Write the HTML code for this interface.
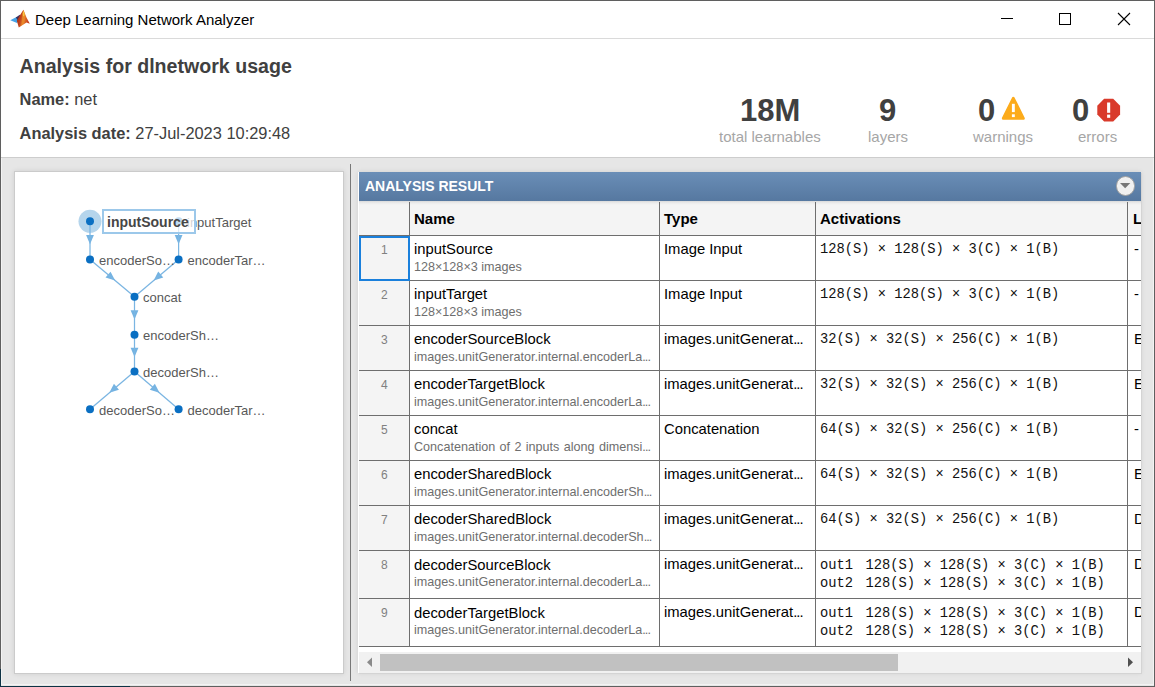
<!DOCTYPE html><html><head><meta charset="utf-8"><style>
html,body{margin:0;padding:0;width:1155px;height:687px;overflow:hidden;background:#e6e6e6;}
body{position:relative;font-family:"Liberation Sans",sans-serif;}
.a{position:absolute;}
.t{position:absolute;line-height:0;white-space:pre;}
</style></head><body>
<div class="a" style="left:0;top:0;width:1153px;height:685px;border:1px solid #5f5f5f;background:#e6e6e6"></div>
<div class="a" style="left:1px;top:158px;width:1151px;height:526px;border:1px solid #f3f3f3;border-top:0"></div>
<div class="a" style="left:0;top:686px;width:130px;height:1px;background:#0d3244"></div>
<div class="a" style="left:0;top:669px;width:1px;height:18px;background:#0d3244"></div>
<div class="a" style="left:1px;top:1px;width:1153px;height:37px;background:#fff;border-bottom:1px solid #dadada"></div>
<div class="a" style="left:1px;top:39px;width:1153px;height:118px;background:#fff;border-bottom:1px solid #cdcdcd"></div>
<svg class="a" style="left:0;top:0" width="32" height="32" viewBox="0 0 32 32">
 <defs><linearGradient id="mg1" x1="0" y1="0" x2="1" y2="0.3"><stop offset="0" stop-color="#8f2416"/><stop offset="0.4" stop-color="#c2421c"/><stop offset="0.62" stop-color="#e8842a"/><stop offset="1" stop-color="#c63a1c"/></linearGradient></defs>
 <path d="M10.3,20.3 L16.5,17 L19,19.5 L17,23 Z" fill="#46a2e6"/>
 <path d="M15.8,17.6 L19.8,14.8 L21,19 L18,20.5 Z" fill="#3a2f5e"/>
 <path d="M23.4,9.8 L26.5,17.5 L29.8,23.8 L26.5,22.5 L18.8,27.6 L16.8,20.8 L19.8,15.5 Z" fill="url(#mg1)"/>
 <path d="M23.4,9.8 L25.3,16.5 L24.3,23 L21.5,25.5 L22.2,17 Z" fill="#e98a2b" opacity="0.85"/>
 <ellipse cx="23.6" cy="13.8" rx="0.9" ry="2.6" fill="#f8c63e"/>
</svg>
<div class="t" style="left:35px;top:19.80px;font-size:15px;color:#000;font-weight:normal;font-family:'Liberation Sans',sans-serif;">Deep Learning Network Analyzer</div>
<div class="a" style="left:1001px;top:18px;width:12px;height:1px;background:#000"></div>
<div class="a" style="left:1059px;top:13px;width:10px;height:10px;border:1px solid #000"></div>
<svg class="a" style="left:1117px;top:12px" width="14" height="14" viewBox="0 0 14 14"><path d="M1,1 L13,13 M13,1 L1,13" stroke="#000" stroke-width="1.1"/></svg>
<div class="t" style="left:19.6px;top:66.21px;font-size:19.6px;color:#404040;font-weight:bold;font-family:'Liberation Sans',sans-serif;">Analysis for dlnetwork usage</div>
<div class="t" style="left:19.6px;top:99.32px;font-size:16.4px;color:#404040;font-weight:normal;font-family:'Liberation Sans',sans-serif;"><b>Name:</b> net</div>
<div class="t" style="left:19.6px;top:133.32px;font-size:16.4px;color:#404040;font-weight:normal;font-family:'Liberation Sans',sans-serif;"><b>Analysis date:</b> 27-Jul-2023 10:29:48</div>
<div class="t" style="left:740px;top:111.06px;font-size:31px;color:#404040;font-weight:bold;font-family:'Liberation Sans',sans-serif;">18M</div>
<div class="t" style="left:879px;top:111.06px;font-size:31px;color:#404040;font-weight:bold;font-family:'Liberation Sans',sans-serif;">9</div>
<div class="t" style="left:978px;top:111.06px;font-size:31px;color:#404040;font-weight:bold;font-family:'Liberation Sans',sans-serif;">0</div>
<div class="t" style="left:1072px;top:111.06px;font-size:31px;color:#404040;font-weight:bold;font-family:'Liberation Sans',sans-serif;">0</div>
<div class="t" style="left:719px;top:136.80px;font-size:15px;color:#a6a6a6;font-weight:normal;font-family:'Liberation Sans',sans-serif;">total learnables</div>
<div class="t" style="left:868px;top:136.80px;font-size:15px;color:#a6a6a6;font-weight:normal;font-family:'Liberation Sans',sans-serif;">layers</div>
<div class="t" style="left:973px;top:136.80px;font-size:15px;color:#a6a6a6;font-weight:normal;font-family:'Liberation Sans',sans-serif;">warnings</div>
<div class="t" style="left:1078px;top:136.80px;font-size:15px;color:#a6a6a6;font-weight:normal;font-family:'Liberation Sans',sans-serif;">errors</div>
<svg class="a" style="left:1000px;top:95px" width="27" height="27" viewBox="1000 95 27 27">
 <path d="M1013.3,98.3 L1023.3,118.3 L1003.3,118.3 Z" fill="#fcab1b" stroke="#fcab1b" stroke-width="3" stroke-linejoin="round"/>
 <rect x="1011.9" y="103.8" width="2.9" height="8.3" fill="#fff"/><rect x="1011.9" y="114.3" width="2.9" height="2.8" fill="#fff"/>
</svg>
<svg class="a" style="left:1096px;top:97px" width="26" height="26" viewBox="1096 97 26 26">
 <path d="M1104.1,98.8 L1113.2,98.8 L1120.1,105.7 L1120.1,114.6 L1113.2,121.5 L1104.1,121.5 L1097.3,114.6 L1097.3,105.7 Z" fill="#d93a2b"/>
 <rect x="1107.1" y="102.5" width="3.1" height="10.3" fill="#fff"/><rect x="1107.1" y="114.6" width="3.1" height="3.2" fill="#fff"/>
</svg>
<div class="a" style="left:14px;top:171px;width:328px;height:501px;background:#fff;border:1px solid #cbcbcb;box-shadow:0 0 5px rgba(0,0,0,0.10)"></div>
<div class="a" style="left:350px;top:164px;width:1px;height:517px;background:#787878"></div>
<div class="a" style="left:358px;top:172px;width:783px;height:501px;background:#fff;box-shadow:1px 1px 0 #d4d4d4,0 0 5px rgba(0,0,0,0.10)"></div>
<svg class="a" style="left:0;top:0" width="350" height="687" viewBox="0 0 350 687"><circle cx="90" cy="221.3" r="11.5" fill="#b5d5ec"/><path d="M90.00,244.20 L86.10,234.90 L93.90,234.90 Z" fill="#74b3e2"/><line x1="90" y1="221.3" x2="90" y2="259.5" stroke="#7ab5e2" stroke-width="1.25"/><path d="M178.60,244.20 L174.70,234.90 L182.50,234.90 Z" fill="#74b3e2"/><line x1="178.6" y1="221.3" x2="178.6" y2="259.5" stroke="#7ab5e2" stroke-width="1.25"/><path d="M115.16,280.59 L105.53,277.61 L110.54,271.63 Z" fill="#74b3e2"/><line x1="90" y1="259.5" x2="134.5" y2="296.8" stroke="#7ab5e2" stroke-width="1.25"/><path d="M153.65,280.60 L158.23,271.62 L163.27,277.58 Z" fill="#74b3e2"/><line x1="178.6" y1="259.5" x2="134.5" y2="296.8" stroke="#7ab5e2" stroke-width="1.25"/><path d="M134.50,319.55 L130.60,310.25 L138.40,310.25 Z" fill="#74b3e2"/><line x1="134.5" y1="296.8" x2="134.5" y2="334.7" stroke="#7ab5e2" stroke-width="1.25"/><path d="M134.50,356.95 L130.60,347.65 L138.40,347.65 Z" fill="#74b3e2"/><line x1="134.5" y1="334.7" x2="134.5" y2="371.6" stroke="#7ab5e2" stroke-width="1.25"/><path d="M109.35,392.85 L113.93,383.87 L118.97,389.83 Z" fill="#74b3e2"/><line x1="134.5" y1="371.6" x2="90" y2="409.2" stroke="#7ab5e2" stroke-width="1.25"/><path d="M159.44,392.87 L149.83,389.80 L154.90,383.86 Z" fill="#74b3e2"/><line x1="134.5" y1="371.6" x2="178.6" y2="409.2" stroke="#7ab5e2" stroke-width="1.25"/><circle cx="90" cy="221.3" r="4" fill="#0a6fc2"/><circle cx="178.6" cy="221.3" r="4" fill="#0a6fc2"/><circle cx="90" cy="259.5" r="4" fill="#0a6fc2"/><circle cx="178.6" cy="259.5" r="4" fill="#0a6fc2"/><circle cx="134.5" cy="296.8" r="4" fill="#0a6fc2"/><circle cx="134.5" cy="334.7" r="4" fill="#0a6fc2"/><circle cx="134.5" cy="371.6" r="4" fill="#0a6fc2"/><circle cx="90" cy="409.2" r="4" fill="#0a6fc2"/><circle cx="178.6" cy="409.2" r="4" fill="#0a6fc2"/></svg>
<div class="t" style="left:187px;top:222.70px;font-size:13px;color:#585858;font-weight:normal;font-family:'Liberation Sans',sans-serif;">inputTarget</div>
<div class="t" style="left:99px;top:260.80px;font-size:13px;color:#585858;font-weight:normal;font-family:'Liberation Sans',sans-serif;">encoderSo…</div>
<div class="t" style="left:187.5px;top:260.80px;font-size:13px;color:#585858;font-weight:normal;font-family:'Liberation Sans',sans-serif;">encoderTar…</div>
<div class="t" style="left:143px;top:297.80px;font-size:13px;color:#585858;font-weight:normal;font-family:'Liberation Sans',sans-serif;">concat</div>
<div class="t" style="left:143px;top:335.80px;font-size:13px;color:#585858;font-weight:normal;font-family:'Liberation Sans',sans-serif;">encoderSh…</div>
<div class="t" style="left:143px;top:372.70px;font-size:13px;color:#585858;font-weight:normal;font-family:'Liberation Sans',sans-serif;">decoderSh…</div>
<div class="t" style="left:99px;top:410.80px;font-size:13px;color:#585858;font-weight:normal;font-family:'Liberation Sans',sans-serif;">decoderSo…</div>
<div class="t" style="left:187.5px;top:410.80px;font-size:13px;color:#585858;font-weight:normal;font-family:'Liberation Sans',sans-serif;">decoderTar…</div>
<div class="a" style="left:102px;top:209px;width:90px;height:21px;border:2px solid #9cc8ea;background:rgba(255,255,255,0.75)"></div>
<div class="t" style="left:107px;top:222.45px;font-size:14px;color:#464646;font-weight:bold;font-family:'Liberation Sans',sans-serif;">inputSource</div>
<div class="a" style="left:359px;top:172px;width:782px;height:29px;background:linear-gradient(#6a8eb7,#5678a0)"></div>
<div class="t" style="left:365px;top:186.15px;font-size:14px;color:#fff;font-weight:bold;font-family:'Liberation Sans',sans-serif;">ANALYSIS RESULT</div>
<div class="a" style="left:1115.5px;top:176.4px;width:17.2px;height:17.2px;border-radius:50%;background:#f0f0f0;border:1px solid #a0a0a0"></div>
<svg class="a" style="left:1120px;top:183px" width="11" height="6" viewBox="0 0 11 6"><path d="M0,0 L10.3,0 L5.15,5.3 Z" fill="#777"/></svg>
<div class="a" style="left:359px;top:201px;width:782px;height:34px;background:linear-gradient(#d9d9d9 0px,#ececec 2px,#f4f4f4 4px)"></div>
<div class="a" style="left:359px;top:235px;width:782px;height:1px;background:#6e6e6e"></div>
<div class="a" style="left:409px;top:202px;width:1px;height:444px;background:#6e6e6e"></div>
<div class="a" style="left:659px;top:202px;width:1px;height:444px;background:#6e6e6e"></div>
<div class="a" style="left:815px;top:202px;width:1px;height:444px;background:#6e6e6e"></div>
<div class="a" style="left:1127px;top:202px;width:1px;height:444px;background:#6e6e6e"></div>
<div class="t" style="left:414px;top:218.80px;font-size:15px;color:#000;font-weight:bold;font-family:'Liberation Sans',sans-serif;">Name</div>
<div class="t" style="left:664px;top:218.80px;font-size:15px;color:#000;font-weight:bold;font-family:'Liberation Sans',sans-serif;">Type</div>
<div class="t" style="left:820px;top:218.80px;font-size:15px;color:#000;font-weight:bold;font-family:'Liberation Sans',sans-serif;">Activations</div>
<div class="a" style="left:1128px;top:203px;width:13px;height:30px;overflow:hidden">
<div class="t" style="left:5px;top:15.80px;font-size:15px;color:#000;font-weight:bold;font-family:'Liberation Sans',sans-serif;">L</div>
</div>
<div class="a" style="left:359px;top:236px;width:50px;height:44px;background:#f4f4f4"></div>
<div class="a" style="left:359px;top:280px;width:782px;height:1px;background:#6e6e6e"></div>
<div class="t" style="left:381px;top:249.54px;font-size:12px;color:#808080;font-weight:normal;font-family:'Liberation Sans',sans-serif;">1</div>
<div class="t" style="left:414px;top:249.07px;font-size:14.8px;color:#000;font-weight:normal;font-family:'Liberation Sans',sans-serif;">inputSource</div>
<div class="t" style="left:414px;top:266.93px;font-size:12.6px;color:#6e6e6e;font-weight:normal;font-family:'Liberation Sans',sans-serif;">128×128×3 images</div>
<div class="t" style="left:664px;top:248.57px;font-size:14.8px;color:#000;font-weight:normal;font-family:'Liberation Sans',sans-serif;">Image Input</div>
<div class="t" style="left:820px;top:249.84px;font-size:13.75px;color:#111;font-weight:normal;font-family:'Liberation Mono',monospace;">128(S) × 128(S) × 3(C) × 1(B)</div>
<div class="a" style="left:1128px;top:236px;width:13px;height:40px;overflow:hidden">
<div class="t" style="left:6px;top:12.57px;font-size:14.8px;color:#000;font-weight:normal;font-family:'Liberation Sans',sans-serif;">-</div>
</div>
<div class="a" style="left:359px;top:281px;width:50px;height:44px;background:#f4f4f4"></div>
<div class="a" style="left:359px;top:325px;width:782px;height:1px;background:#6e6e6e"></div>
<div class="t" style="left:381px;top:294.54px;font-size:12px;color:#808080;font-weight:normal;font-family:'Liberation Sans',sans-serif;">2</div>
<div class="t" style="left:414px;top:294.07px;font-size:14.8px;color:#000;font-weight:normal;font-family:'Liberation Sans',sans-serif;">inputTarget</div>
<div class="t" style="left:414px;top:311.93px;font-size:12.6px;color:#6e6e6e;font-weight:normal;font-family:'Liberation Sans',sans-serif;">128×128×3 images</div>
<div class="t" style="left:664px;top:293.57px;font-size:14.8px;color:#000;font-weight:normal;font-family:'Liberation Sans',sans-serif;">Image Input</div>
<div class="t" style="left:820px;top:294.84px;font-size:13.75px;color:#111;font-weight:normal;font-family:'Liberation Mono',monospace;">128(S) × 128(S) × 3(C) × 1(B)</div>
<div class="a" style="left:1128px;top:281px;width:13px;height:40px;overflow:hidden">
<div class="t" style="left:6px;top:12.57px;font-size:14.8px;color:#000;font-weight:normal;font-family:'Liberation Sans',sans-serif;">-</div>
</div>
<div class="a" style="left:359px;top:326px;width:50px;height:44px;background:#f4f4f4"></div>
<div class="a" style="left:359px;top:370px;width:782px;height:1px;background:#6e6e6e"></div>
<div class="t" style="left:381px;top:339.54px;font-size:12px;color:#808080;font-weight:normal;font-family:'Liberation Sans',sans-serif;">3</div>
<div class="t" style="left:414px;top:339.07px;font-size:14.8px;color:#000;font-weight:normal;font-family:'Liberation Sans',sans-serif;">encoderSourceBlock</div>
<div class="t" style="left:414px;top:356.93px;font-size:12.6px;color:#6e6e6e;font-weight:normal;font-family:'Liberation Sans',sans-serif;">images.unitGenerator.internal.encoderLa<span style="letter-spacing:-0.9px">...</span></div>
<div class="t" style="left:664px;top:338.57px;font-size:14.8px;color:#000;font-weight:normal;font-family:'Liberation Sans',sans-serif;">images.unitGenerat<span style="letter-spacing:-0.9px">...</span></div>
<div class="t" style="left:820px;top:339.84px;font-size:13.75px;color:#111;font-weight:normal;font-family:'Liberation Mono',monospace;">32(S) × 32(S) × 256(C) × 1(B)</div>
<div class="a" style="left:1128px;top:326px;width:13px;height:40px;overflow:hidden">
<div class="t" style="left:6px;top:12.57px;font-size:14.8px;color:#000;font-weight:normal;font-family:'Liberation Sans',sans-serif;">E</div>
</div>
<div class="a" style="left:359px;top:371px;width:50px;height:44px;background:#f4f4f4"></div>
<div class="a" style="left:359px;top:415px;width:782px;height:1px;background:#6e6e6e"></div>
<div class="t" style="left:381px;top:384.54px;font-size:12px;color:#808080;font-weight:normal;font-family:'Liberation Sans',sans-serif;">4</div>
<div class="t" style="left:414px;top:384.07px;font-size:14.8px;color:#000;font-weight:normal;font-family:'Liberation Sans',sans-serif;">encoderTargetBlock</div>
<div class="t" style="left:414px;top:401.93px;font-size:12.6px;color:#6e6e6e;font-weight:normal;font-family:'Liberation Sans',sans-serif;">images.unitGenerator.internal.encoderLa<span style="letter-spacing:-0.9px">...</span></div>
<div class="t" style="left:664px;top:383.57px;font-size:14.8px;color:#000;font-weight:normal;font-family:'Liberation Sans',sans-serif;">images.unitGenerat<span style="letter-spacing:-0.9px">...</span></div>
<div class="t" style="left:820px;top:384.84px;font-size:13.75px;color:#111;font-weight:normal;font-family:'Liberation Mono',monospace;">32(S) × 32(S) × 256(C) × 1(B)</div>
<div class="a" style="left:1128px;top:371px;width:13px;height:40px;overflow:hidden">
<div class="t" style="left:6px;top:12.57px;font-size:14.8px;color:#000;font-weight:normal;font-family:'Liberation Sans',sans-serif;">E</div>
</div>
<div class="a" style="left:359px;top:416px;width:50px;height:44px;background:#f4f4f4"></div>
<div class="a" style="left:359px;top:460px;width:782px;height:1px;background:#6e6e6e"></div>
<div class="t" style="left:381px;top:429.54px;font-size:12px;color:#808080;font-weight:normal;font-family:'Liberation Sans',sans-serif;">5</div>
<div class="t" style="left:414px;top:429.07px;font-size:14.8px;color:#000;font-weight:normal;font-family:'Liberation Sans',sans-serif;">concat</div>
<div class="t" style="left:414px;top:446.93px;font-size:12.6px;color:#6e6e6e;font-weight:normal;font-family:'Liberation Sans',sans-serif;word-spacing:0.85px;">Concatenation of 2 inputs along dimensi<span style="letter-spacing:-0.9px">...</span></div>
<div class="t" style="left:664px;top:428.57px;font-size:14.8px;color:#000;font-weight:normal;font-family:'Liberation Sans',sans-serif;">Concatenation</div>
<div class="t" style="left:820px;top:429.84px;font-size:13.75px;color:#111;font-weight:normal;font-family:'Liberation Mono',monospace;">64(S) × 32(S) × 256(C) × 1(B)</div>
<div class="a" style="left:1128px;top:416px;width:13px;height:40px;overflow:hidden">
<div class="t" style="left:6px;top:12.57px;font-size:14.8px;color:#000;font-weight:normal;font-family:'Liberation Sans',sans-serif;">-</div>
</div>
<div class="a" style="left:359px;top:461px;width:50px;height:44px;background:#f4f4f4"></div>
<div class="a" style="left:359px;top:505px;width:782px;height:1px;background:#6e6e6e"></div>
<div class="t" style="left:381px;top:474.54px;font-size:12px;color:#808080;font-weight:normal;font-family:'Liberation Sans',sans-serif;">6</div>
<div class="t" style="left:414px;top:474.07px;font-size:14.8px;color:#000;font-weight:normal;font-family:'Liberation Sans',sans-serif;">encoderSharedBlock</div>
<div class="t" style="left:414px;top:491.93px;font-size:12.6px;color:#6e6e6e;font-weight:normal;font-family:'Liberation Sans',sans-serif;">images.unitGenerator.internal.encoderSh<span style="letter-spacing:-0.9px">...</span></div>
<div class="t" style="left:664px;top:473.57px;font-size:14.8px;color:#000;font-weight:normal;font-family:'Liberation Sans',sans-serif;">images.unitGenerat<span style="letter-spacing:-0.9px">...</span></div>
<div class="t" style="left:820px;top:474.84px;font-size:13.75px;color:#111;font-weight:normal;font-family:'Liberation Mono',monospace;">64(S) × 32(S) × 256(C) × 1(B)</div>
<div class="a" style="left:1128px;top:461px;width:13px;height:40px;overflow:hidden">
<div class="t" style="left:6px;top:12.57px;font-size:14.8px;color:#000;font-weight:normal;font-family:'Liberation Sans',sans-serif;">E</div>
</div>
<div class="a" style="left:359px;top:506px;width:50px;height:44px;background:#f4f4f4"></div>
<div class="a" style="left:359px;top:550px;width:782px;height:1px;background:#6e6e6e"></div>
<div class="t" style="left:381px;top:519.54px;font-size:12px;color:#808080;font-weight:normal;font-family:'Liberation Sans',sans-serif;">7</div>
<div class="t" style="left:414px;top:519.07px;font-size:14.8px;color:#000;font-weight:normal;font-family:'Liberation Sans',sans-serif;">decoderSharedBlock</div>
<div class="t" style="left:414px;top:536.93px;font-size:12.6px;color:#6e6e6e;font-weight:normal;font-family:'Liberation Sans',sans-serif;">images.unitGenerator.internal.decoderSh<span style="letter-spacing:-0.9px">...</span></div>
<div class="t" style="left:664px;top:518.57px;font-size:14.8px;color:#000;font-weight:normal;font-family:'Liberation Sans',sans-serif;">images.unitGenerat<span style="letter-spacing:-0.9px">...</span></div>
<div class="t" style="left:820px;top:519.84px;font-size:13.75px;color:#111;font-weight:normal;font-family:'Liberation Mono',monospace;">64(S) × 32(S) × 256(C) × 1(B)</div>
<div class="a" style="left:1128px;top:506px;width:13px;height:40px;overflow:hidden">
<div class="t" style="left:6px;top:12.57px;font-size:14.8px;color:#000;font-weight:normal;font-family:'Liberation Sans',sans-serif;">D</div>
</div>
<div class="a" style="left:359px;top:551px;width:50px;height:47px;background:#f4f4f4"></div>
<div class="a" style="left:359px;top:598px;width:782px;height:1px;background:#6e6e6e"></div>
<div class="t" style="left:381px;top:564.54px;font-size:12px;color:#808080;font-weight:normal;font-family:'Liberation Sans',sans-serif;">8</div>
<div class="t" style="left:414px;top:564.87px;font-size:14.8px;color:#000;font-weight:normal;font-family:'Liberation Sans',sans-serif;">decoderSourceBlock</div>
<div class="t" style="left:414px;top:581.93px;font-size:12.6px;color:#6e6e6e;font-weight:normal;font-family:'Liberation Sans',sans-serif;">images.unitGenerator.internal.decoderLa<span style="letter-spacing:-0.9px">...</span></div>
<div class="t" style="left:664px;top:564.37px;font-size:14.8px;color:#000;font-weight:normal;font-family:'Liberation Sans',sans-serif;">images.unitGenerat<span style="letter-spacing:-0.9px">...</span></div>
<div class="t" style="left:820px;top:565.84px;font-size:13.75px;color:#111;font-weight:normal;font-family:'Liberation Mono',monospace;">out1</div>
<div class="t" style="left:865.5px;top:565.84px;font-size:13.75px;color:#111;font-weight:normal;font-family:'Liberation Mono',monospace;">128(S) × 128(S) × 3(C) × 1(B)</div>
<div class="t" style="left:820px;top:583.84px;font-size:13.75px;color:#111;font-weight:normal;font-family:'Liberation Mono',monospace;">out2</div>
<div class="t" style="left:865.5px;top:583.84px;font-size:13.75px;color:#111;font-weight:normal;font-family:'Liberation Mono',monospace;">128(S) × 128(S) × 3(C) × 1(B)</div>
<div class="a" style="left:1128px;top:551px;width:13px;height:40px;overflow:hidden">
<div class="t" style="left:6px;top:12.57px;font-size:14.8px;color:#000;font-weight:normal;font-family:'Liberation Sans',sans-serif;">D</div>
</div>
<div class="a" style="left:359px;top:599px;width:50px;height:47px;background:#f4f4f4"></div>
<div class="a" style="left:359px;top:646px;width:782px;height:1px;background:#6e6e6e"></div>
<div class="t" style="left:381px;top:612.54px;font-size:12px;color:#808080;font-weight:normal;font-family:'Liberation Sans',sans-serif;">9</div>
<div class="t" style="left:414px;top:612.87px;font-size:14.8px;color:#000;font-weight:normal;font-family:'Liberation Sans',sans-serif;">decoderTargetBlock</div>
<div class="t" style="left:414px;top:629.93px;font-size:12.6px;color:#6e6e6e;font-weight:normal;font-family:'Liberation Sans',sans-serif;">images.unitGenerator.internal.decoderLa<span style="letter-spacing:-0.9px">...</span></div>
<div class="t" style="left:664px;top:612.37px;font-size:14.8px;color:#000;font-weight:normal;font-family:'Liberation Sans',sans-serif;">images.unitGenerat<span style="letter-spacing:-0.9px">...</span></div>
<div class="t" style="left:820px;top:613.84px;font-size:13.75px;color:#111;font-weight:normal;font-family:'Liberation Mono',monospace;">out1</div>
<div class="t" style="left:865.5px;top:613.84px;font-size:13.75px;color:#111;font-weight:normal;font-family:'Liberation Mono',monospace;">128(S) × 128(S) × 3(C) × 1(B)</div>
<div class="t" style="left:820px;top:631.84px;font-size:13.75px;color:#111;font-weight:normal;font-family:'Liberation Mono',monospace;">out2</div>
<div class="t" style="left:865.5px;top:631.84px;font-size:13.75px;color:#111;font-weight:normal;font-family:'Liberation Mono',monospace;">128(S) × 128(S) × 3(C) × 1(B)</div>
<div class="a" style="left:1128px;top:599px;width:13px;height:40px;overflow:hidden">
<div class="t" style="left:6px;top:12.57px;font-size:14.8px;color:#000;font-weight:normal;font-family:'Liberation Sans',sans-serif;">D</div>
</div>
<div class="a" style="left:359px;top:236px;width:47px;height:41px;border:2px solid #1a80dc"></div>
<div class="a" style="left:359px;top:652px;width:782px;height:21px;background:#f1f1f1"></div>
<div class="a" style="left:380px;top:654px;width:518px;height:17px;background:#c1c1c1"></div>
<svg class="a" style="left:366px;top:657px" width="8" height="11" viewBox="0 0 8 11"><path d="M6,0.5 L6,10 L1,5.25 Z" fill="#8a8a8a"/></svg>
<svg class="a" style="left:1127px;top:657px" width="8" height="11" viewBox="0 0 8 11"><path d="M1,0.5 L1,10 L6,5.25 Z" fill="#505050"/></svg>
</body></html>
